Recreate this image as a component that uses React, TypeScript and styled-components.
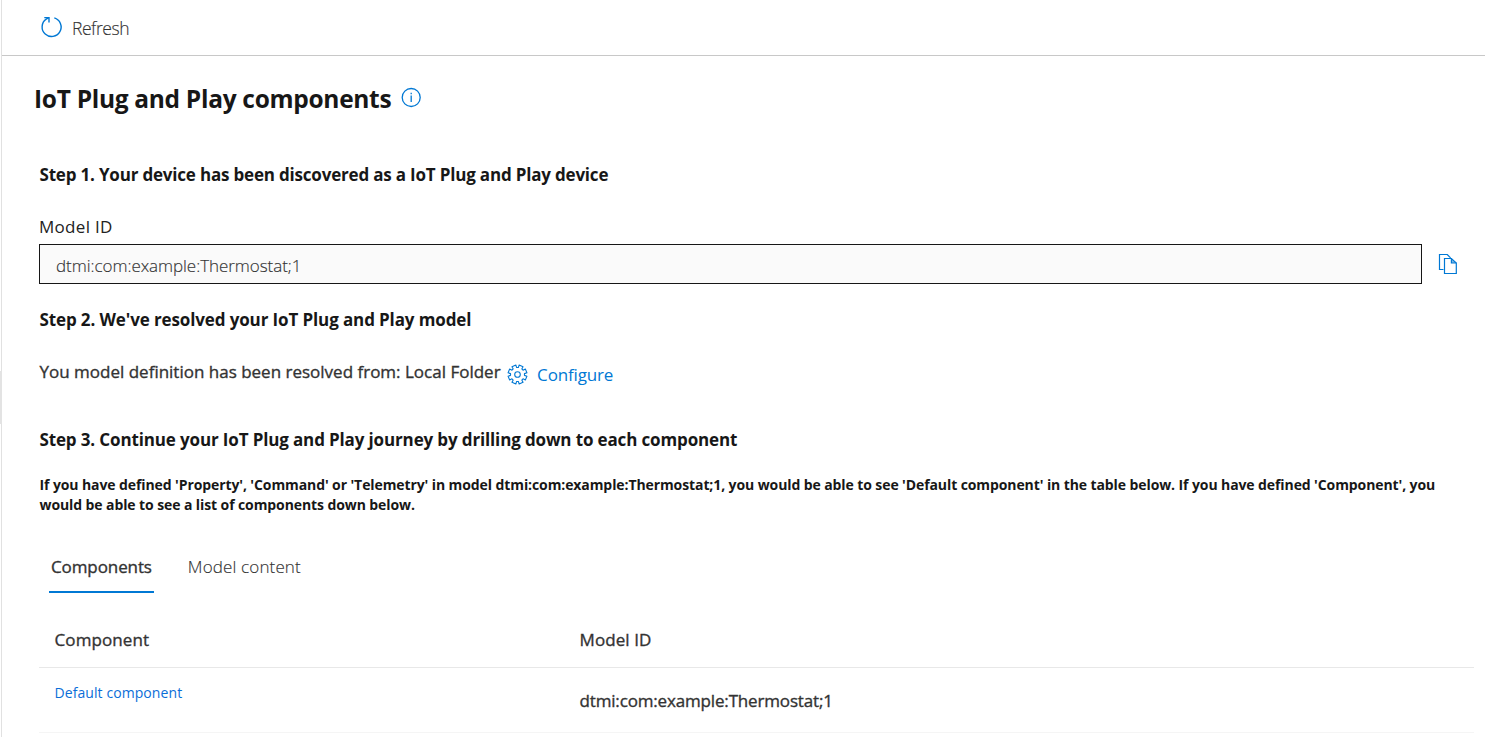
import React from 'react';
import styled, { createGlobalStyle, css } from 'styled-components';

const GlobalStyle = createGlobalStyle`
  * { box-sizing: border-box; }
  body {
    margin: 0;
    background: #fff;
    color: #333;
    font: 400 17px/20px "Open Sans", "Noto Sans", sans-serif;
    overflow: hidden;
  }
  svg { display: block; flex: none; }
`;

const medium = css`
  font-weight: 400;
  -webkit-text-stroke: 0.35px currentColor;
`;

const light = css`
  font-weight: 300;
  -webkit-text-stroke: 0.15px currentColor;
`;

const Page = styled.div`
  position: relative;
  height: 737px;
  margin-left: 1px;
  border-left: 1px solid #e1e1e1;
`;

const PaneHandle = styled.div`
  position: absolute;
  left: -2px;
  top: 371px;
  width: 2px;
  height: 53px;
  background: #e3e3e3;
`;

const CommandBar = styled.header`
  display: flex;
  height: 56px;
  border-bottom: 1px solid #c8c8c8;
  padding: 16px 0 0 38px;
`;

const RefreshButton = styled.button`
  display: flex;
  align-items: flex-start;
  gap: 8px;
  height: 24px;
  padding: 0;
  border: 0;
  background: none;
  color: #333;
  font: 300 17.5px/20px "Open Sans", sans-serif;
  -webkit-text-stroke: 0.15px currentColor;
  letter-spacing: -0.45px;
  white-space: nowrap;

  span { margin-top: 2px; }
`;

const TitleRow = styled.div`
  display: flex;
  gap: 10px;
  height: 109px;
  padding: 28px 0 0 32px;
`;

const Title = styled.h1`
  margin: 0;
  color: #171717;
  font-size: 24.5px;
  font-weight: 700;
  line-height: 30px;
  letter-spacing: -0.3px;
  white-space: nowrap;
`;

const InfoIconBox = styled.span`
  padding-top: 3px;
`;

const Content = styled.main`
  padding: 0 11px 0 37px;
`;

const StepHeading = styled.h2<{ $gap: number; $spacing: number }>`
  margin: 0 0 ${(p) => p.$gap}px;
  padding-left: 0.5px;
  color: #171717;
  font-size: 17px;
  font-weight: 700;
  line-height: 20px;
  letter-spacing: ${(p) => p.$spacing}px;
`;

const FieldLabel = styled.label`
  display: block;
  margin-bottom: 7px;
  color: #222;
  letter-spacing: 0.3px;
`;

const FieldRow = styled.div`
  display: flex;
  align-items: center;
  gap: 16px;
  margin-bottom: 26px;
`;

const ReadOnlyField = styled.div`
  ${light}
  width: 1383px;
  height: 40px;
  padding: 11px 16px 0;
  border: 1px solid #171717;
  background: #fafafa;
  color: #333;
  letter-spacing: -0.05px;
`;

const SourceRow = styled.div`
  display: flex;
  height: 22px;
  margin-bottom: 46px;
`;

const SourceText = styled.span`
  ${medium}
  padding-left: 0.5px;
  margin-right: 6px;
  white-space: nowrap;
`;

const ConfigureLink = styled.a`
  display: flex;
  gap: 9.5px;
  padding-top: 3px;
  color: #0078d4;
  letter-spacing: -0.15px;

  svg { margin-top: -1px; }
`;

const Description = styled.p`
  margin: 0 0 42px;
  padding-left: 0.5px;
  color: #171717;
  font-size: 14px;
  font-weight: 700;
  line-height: 20px;
  letter-spacing: -0.095px;
  white-space: nowrap;
`;

const Tabs = styled.nav`
  display: flex;
  gap: 32px;
  margin: 0 0 37px 10px;
`;

const Tab = styled.span<{ $active?: boolean }>`
  height: 36px;
  padding: 0 2px;
  border-bottom: 2px solid ${(p) => (p.$active ? '#0078d4' : 'transparent')};
  ${(p) => (p.$active ? medium : light)}
  letter-spacing: ${(p) => (p.$active ? -0.1 : 0.14)}px;
`;

const Row = styled.div<{ $head?: boolean }>`
  ${medium}
  display: grid;
  grid-template-columns: 525px 1fr;
  height: ${(p) => (p.$head ? 38 : 65)}px;
  padding-left: 15.5px;
  border-bottom: 1px solid ${(p) => (p.$head ? '#e8e8e8' : '#f5f5f5')};
  letter-spacing: ${(p) => (p.$head ? 0.1 : -0.16)}px;
`;

const ComponentLink = styled.a`
  padding-top: 15px;
  color: #0a6ed8;
  font-size: 14px;
  letter-spacing: 0.08px;
  -webkit-text-stroke: 0;
`;

const ModelCell = styled.span`
  padding-top: 23px;
`;

const RefreshIcon = () => (
  <svg width="24" height="24" viewBox="0 0 24 24" fill="none" stroke="#0078d4" strokeWidth="1.4">
    <path d="M14.3 1.9A9.5 9.5 0 1 1 6.2 3.2L8.8 1.7" />
    <path d="M4.3 1.6H9V6.4" />
  </svg>
);

const InfoIcon = () => (
  <svg width="21" height="21" viewBox="0 0 21 21" fill="none" stroke="#0078d4" strokeWidth="1.3">
    <circle cx="10.2" cy="10.5" r="9" />
    <path d="M10.2 8.6V15M10.2 5.8V7.3" />
  </svg>
);

const CopyIcon = () => (
  <svg width="19" height="21" viewBox="0 0 19 21" fill="none" stroke="#0078d4" strokeWidth="1.2">
    <path d="M5.5 15.5H1.5V.5H9.2L12.6 3.9" />
    <path d="M6.5 4.5H13.4L18.3 9V19.5H6.5Z" />
    <path d="M13.4 4.5V9H18.3" fill="#0078d4" fillOpacity="0.5" />
  </svg>
);

const gearPath = (() => {
  const outline: [number, number][] = [[-0.27, 7], [-0.22, 9.6], [0.22, 9.6], [0.27, 7]];
  const points: string[] = [];
  for (let i = 0; i < 8; i++) {
    const a = (i * Math.PI) / 4 + Math.PI / 8;
    outline.forEach(([d, r]) => {
      points.push(`${(10.5 + r * Math.sin(a + d)).toFixed(2)} ${(10.5 - r * Math.cos(a + d)).toFixed(2)}`);
    });
  }
  return `M${points.join('L')}Z`;
})();

const GearIcon = () => (
  <svg width="21" height="21" viewBox="0 0 21 21" fill="none" stroke="#0078d4" strokeWidth="1.1" strokeLinejoin="round">
    <path d={gearPath} />
    <circle cx="10.5" cy="10.5" r="2.8" />
  </svg>
);

export default function App() {
  return (
    <>
      <GlobalStyle />
      <Page>
        <PaneHandle />
        <CommandBar>
          <RefreshButton>
            <RefreshIcon />
            <span>Refresh</span>
          </RefreshButton>
        </CommandBar>
        <TitleRow>
          <Title>IoT Plug and Play components</Title>
          <InfoIconBox><InfoIcon /></InfoIconBox>
        </TitleRow>
        <Content>
          <StepHeading $gap={32} $spacing={-0.19}>Step 1. Your device has been discovered as a IoT Plug and Play device</StepHeading>
          <FieldLabel>Model ID</FieldLabel>
          <FieldRow>
            <ReadOnlyField>dtmi:com:example:Thermostat;1</ReadOnlyField>
            <CopyIcon />
          </FieldRow>
          <StepHeading $gap={32} $spacing={-0.12}>Step 2. We've resolved your IoT Plug and Play model</StepHeading>
          <SourceRow>
            <SourceText>You model definition has been resolved from: Local Folder</SourceText>
            <ConfigureLink><GearIcon />Configure</ConfigureLink>
          </SourceRow>
          <StepHeading $gap={25} $spacing={-0.14}>Step 3. Continue your IoT Plug and Play journey by drilling down to each component</StepHeading>
          <Description>
            If you have defined 'Property', 'Command' or 'Telemetry' in model dtmi:com:example:Thermostat;1, you would be able to see 'Default component' in the table below. If you have defined 'Component', you
            <br />
            would be able to see a list of components down below.
          </Description>
          <Tabs>
            <Tab $active>Components</Tab>
            <Tab>Model content</Tab>
          </Tabs>
          <Row $head>
            <span>Component</span>
            <span>Model ID</span>
          </Row>
          <Row>
            <ComponentLink>Default component</ComponentLink>
            <ModelCell>dtmi:com:example:Thermostat;1</ModelCell>
          </Row>
        </Content>
      </Page>
    </>
  );
}
